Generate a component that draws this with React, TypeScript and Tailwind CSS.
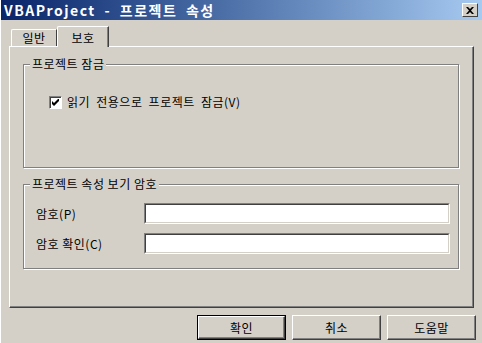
import React from 'react';

const font = { fontFamily: '"Noto Sans CJK KR", "Liberation Sans", sans-serif' };

const GroupBox: React.FC<{ title: string; className: string; children: React.ReactNode }> = ({ title, className, children }) => (
  <div className={`relative border border-[#808080] shadow-[1px_1px_0_#fff,inset_1px_1px_0_#fff] ${className}`}>
    <span className="absolute left-[6px] -top-[9px] bg-[#d4d0c8] px-[2px] text-[12px] leading-[16px] tracking-[0.5px] text-black">
      {title}
    </span>
    {children}
  </div>
);

const Field: React.FC<{ label: string; className?: string }> = ({ label, className = '' }) => (
  <div className={`flex items-center ${className}`}>
    <span className="w-[120px] pl-[12px] text-[12px] leading-[16px] tracking-[0.5px]">{label}</span>
    <div className="h-[21px] w-[306px] border-t border-l border-[#808080] border-r border-b border-r-white border-b-white">
      <div className="h-full w-full bg-white border-t border-l border-[#404040] border-r border-b border-r-[#d4d0c8] border-b-[#d4d0c8]" />
    </div>
  </div>
);

const Button: React.FC<{ label: string; primary?: boolean }> = ({ label, primary }) => (
  <div className={`h-[25px] w-[89px] ${primary ? 'border border-black' : ''}`}>
    <div className="flex h-full w-full items-center justify-center border-t border-l border-white border-r border-b border-r-[#404040] border-b-[#404040] shadow-[inset_-1px_-1px_0_#808080] text-[12px] leading-[16px] tracking-[0.5px]">
      {label}
    </div>
  </div>
);

export default function App() {
  return (
    <div className="flex h-[343px] w-[482px] flex-col bg-[#d4d0c8] text-black border-l border-l-white" style={font}>
      <div className="flex h-[20px] items-center justify-between bg-gradient-to-r from-[#0a246a] to-[#a6caf0] pl-[3px] pr-[4px]">
        <span className="text-[14px] font-bold leading-[16px] tracking-[1.5px] [word-spacing:4px] text-white">VBAProject - 프로젝트 속성</span>
        <div className="flex h-[14px] w-[16px] items-center justify-center border-t border-l border-white border-r border-b border-r-[#404040] border-b-[#404040] bg-[#d4d0c8]">
          <svg width="8" height="7" viewBox="0 0 8 7">
            <path d="M0 0h2l2 2 2-2h2L5 3.5 8 7H6L4 5 2 7H0l3-3.5z" fill="#000" />
          </svg>
        </div>
      </div>

      <div className="ml-[8px] mt-[6px] flex h-[20px] items-end">
        <div className="ml-[2px] flex h-[17px] w-[46px] items-center justify-center border-t border-l border-white border-r border-r-[#404040] rounded-tl-[2px] text-[12px] leading-[16px] tracking-[0.5px]">
          일반
        </div>
        <div className="relative z-10 -mb-px flex h-[21px] w-[52px] items-start justify-center border-t border-l border-white border-r border-r-[#404040] shadow-[inset_-1px_0_0_#808080] rounded-tl-[2px] bg-[#d4d0c8] pt-[3px] text-[12px] leading-[16px] tracking-[0.5px]">
          보호
        </div>
      </div>

      <div className="ml-[8px] h-[262px] w-[465px] border-t border-l border-white border-r border-b border-r-[#404040] border-b-[#404040] shadow-[inset_-1px_-1px_0_#808080] pl-[13px] pt-[17px]">
        <GroupBox title="프로젝트 잠금" className="h-[104px] w-[436px]">
          <div className="ml-[25px] mt-[29px] flex items-center gap-[5px]">
            <div className="flex h-[13px] w-[13px] items-center justify-center bg-white border-t border-l border-[#808080] border-r border-b border-r-white border-b-white shadow-[inset_1px_1px_0_#404040]">
              <svg width="7" height="7" viewBox="0 0 7 7">
                <path d="M0 2v3l2 2 5-5V-1L2 4z" fill="#000" />
              </svg>
            </div>
            <span className="text-[12px] leading-[16px] tracking-[0.5px] [word-spacing:3px]">읽기 전용으로 프로젝트 잠금(V)</span>
          </div>
        </GroupBox>

        <GroupBox title="프로젝트 속성 보기 암호" className="mt-[16px] h-[85px] w-[436px]">
          <div className="pt-[18px]">
            <Field label="암호(P)" />
            <Field label="암호 확인(C)" className="mt-[9px]" />
          </div>
        </GroupBox>
      </div>

      <div className="ml-[196px] mt-[7px] flex gap-[6px]">
        <Button label="확인" primary />
        <Button label="취소" />
        <Button label="도움말" />
      </div>
    </div>
  );
}
